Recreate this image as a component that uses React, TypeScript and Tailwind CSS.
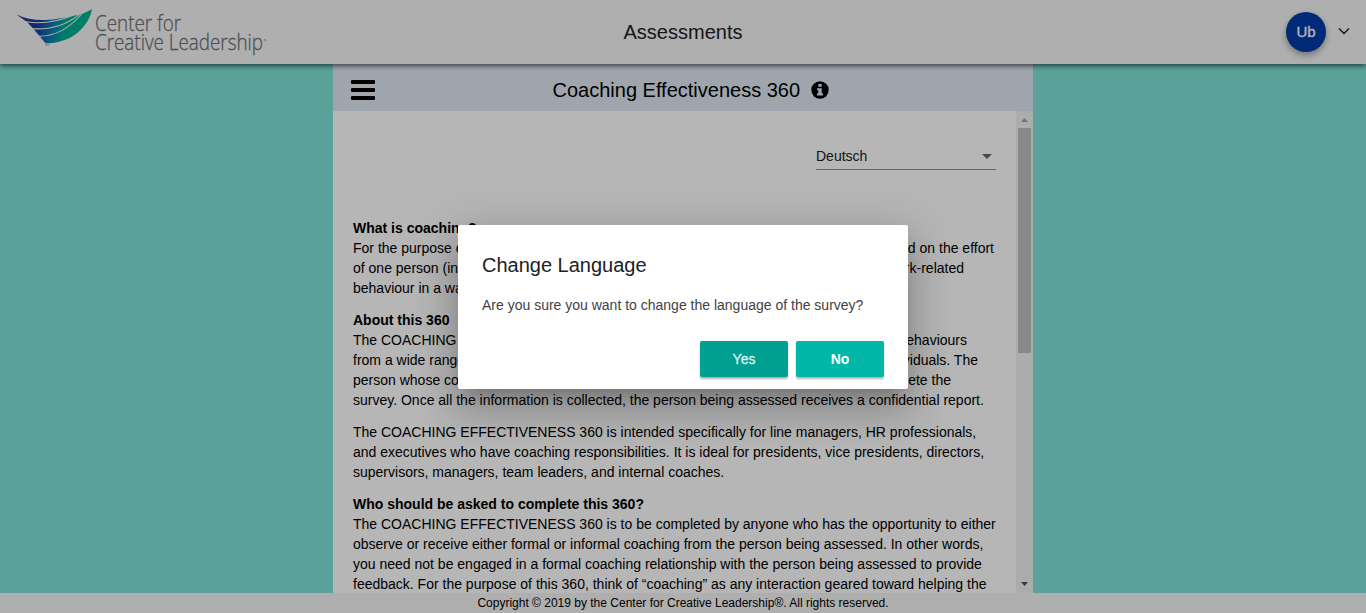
import React from "react";

type Line = string | { start: string; end: string; width: string };

function Logo() {
  return (
    <svg className="block h-16 w-[280px]" viewBox="0 0 280 64">
      <defs>
        <linearGradient id="wing" gradientUnits="userSpaceOnUse" x1="20" y1="10" x2="86" y2="22">
          <stop offset="0" stopColor="#3a2b92" />
          <stop offset="0.3" stopColor="#173c9a" />
          <stop offset="0.52" stopColor="#0f7fae" />
          <stop offset="0.7" stopColor="#00ab98" />
          <stop offset="1" stopColor="#00b28c" />
        </linearGradient>
      </defs>
      <path
        d="M16.500 14.500C25 18.500 35 20.500 46 20C55 19.500 63 18 72 16C81 14.500 87 12.500 92 9C91 17 85 27 76 34C68 40 56 43.500 45.500 43.300L39.500 36L33.500 29L27 22Z"
        fill="url(#wing)"
      />
      <path
        d="M26 21.800C44 24.500 58 21.500 72.500 15.500M32 28.700C48 29.800 66 25.500 80 13.800M38.500 36.200C54 36.500 69 29 82.500 13"
        fill="none"
        stroke="#f5f5f5"
        strokeWidth="1.050"
      />
      <g fill="#6c7276" stroke="#6c7276" strokeWidth="0.300" fontFamily="'Open Sans', 'Noto Sans', sans-serif" fontWeight="300">
        <text x="95" y="30.600" fontSize="21.500" textLength="86" lengthAdjust="spacingAndGlyphs">Center for</text>
        <text x="95" y="50" fontSize="21.500" textLength="168" lengthAdjust="spacingAndGlyphs">Creative Leadership</text>
      </g>
      <circle cx="264.800" cy="40.200" r="0.800" fill="none" stroke="#777c80" strokeWidth="0.500" />
      <path d="M45.500 44.600h3M46.500 44.600v1.400M48.500 46v-1.400" fill="none" stroke="#777c80" strokeWidth="0.500" />
    </svg>
  );
}

function InfoIcon() {
  return (
    <svg className="ml-[11px] size-[18px]" viewBox="0 0 18 18">
      <circle cx="9" cy="9" r="8.700" fill="#000" />
      <path d="M7.300 3h3.400v2.700H7.300zM6 7.200h4.700v5.100H12v2.100H6v-2.100h1.300v-3H6z" fill="#dfe8f3" />
    </svg>
  );
}

function Section({ title, lines }: { title?: string; lines: Line[] }) {
  return (
    <section className="mb-3 whitespace-nowrap">
      {title && <h2 className="font-bold">{title}</h2>}
      {lines.map((line) =>
        typeof line === "string" ? (
          <p key={line}>{line}</p>
        ) : (
          <p key={line.start} className={`flex justify-between ${line.width}`}>
            <span>{line.start}</span>
            <span>{line.end}</span>
          </p>
        ),
      )}
    </section>
  );
}

export default function App() {
  return (
    <div className="relative flex h-[613px] w-[1366px] flex-col overflow-hidden bg-[#80e3da] font-['Liberation_Sans',Arial,sans-serif] text-sm leading-5 text-black">
      <header className="relative z-10 grid h-16 shrink-0 grid-cols-3 items-center bg-[#f5f5f5] shadow-[0_2px_5px_rgba(0,0,0,0.6)]">
        <Logo />
        <h1 className="text-center text-[20px] text-[#212121]">Assessments</h1>
        <div className="flex items-center justify-end pr-4">
          <div className="flex size-10 items-center justify-center rounded-full bg-[#003ca9] text-[15px] text-white shadow-[0_3px_6px_rgba(0,0,0,0.35)]">
            <span className="[-webkit-text-stroke:0.3px_white]">Ub</span>
          </div>
          <svg className="mb-[3px] ml-3 h-3 w-3" viewBox="0 0 12 12">
            <path d="M1 3.500L6 8.500L11 3.500" fill="none" stroke="#222" strokeWidth="1.500" />
          </svg>
        </div>
      </header>

      <main className="mx-auto flex min-h-0 w-[700px] flex-1 flex-col bg-white">
        <div className="flex h-[47px] shrink-0 items-center bg-[#dfe8f3] pl-[18px]">
          <button className="mt-1 flex w-6 flex-col gap-1" aria-label="Menu">
            <span className="h-1 rounded-[1px] bg-black" />
            <span className="h-1 rounded-[1px] bg-black" />
            <span className="h-1 rounded-[1px] bg-black" />
          </button>
          <div className="mt-1 ml-[177.500px] flex items-center whitespace-nowrap">
            <span className="text-[20px]">Coaching Effectiveness 360</span>
            <InfoIcon />
          </div>
        </div>
        <div className="flex min-h-0 flex-1">
          <div className="w-[683px] overflow-hidden px-5">
            <div className="mt-[34px] ml-auto flex h-[25px] w-[180px] items-start justify-between border-b border-[#949494] text-[#212121]">
              <span className="mt-px">Deutsch</span>
              <svg className="mt-[9px] mr-1 h-[5px] w-2.5" viewBox="0 0 10 5">
                <path d="M0 0h10L5 5z" fill="#666" />
              </svg>
            </div>
            <div className="mt-12">
              <Section
                title="What is coaching?"
                lines={[
                  { start: "For the purpose of this survey, coaching", end: "is a relationship focused on the effort", width: "w-[641px]" },
                  { start: "of one person (internal coach) to help", end: "another improve work-related", width: "w-[611px]" },
                  "behaviour in a way that benefits them.",
                ]}
              />
              <Section
                title="About this 360"
                lines={[
                  { start: "The COACHING EFFECTIVENESS 360", end: "collects coaching behaviours", width: "w-[614px]" },
                  { start: "from a wide range of people, providing", end: "a view shared by individuals. The", width: "w-[625px]" },
                  { start: "person whose coaching is assessed", end: "and the raters complete the", width: "w-[598px]" },
                  "survey. Once all the information is collected, the person being assessed receives a confidential report.",
                ]}
              />
              <Section
                lines={[
                  "The COACHING EFFECTIVENESS 360 is intended specifically for line managers, HR professionals,",
                  "and executives who have coaching responsibilities. It is ideal for presidents, vice presidents, directors,",
                  "supervisors, managers, team leaders, and internal coaches.",
                ]}
              />
              <Section
                title="Who should be asked to complete this 360?"
                lines={[
                  "The COACHING EFFECTIVENESS 360 is to be completed by anyone who has the opportunity to either",
                  "observe or receive either formal or informal coaching from the person being assessed. In other words,",
                  "you need not be engaged in a formal coaching relationship with the person being assessed to provide",
                  "feedback. For the purpose of this 360, think of “coaching” as any interaction geared toward helping the",
                ]}
              />
            </div>
          </div>
          <div className="flex w-[17px] flex-col items-center bg-[#f1f1f1]">
            <svg className="h-[17px] w-[17px] shrink-0" viewBox="0 0 17 17">
              <path d="M5 11h7L8.500 7z" fill="#a3a3a3" />
            </svg>
            <div className="h-[225px] w-[13px] bg-[#c1c1c1]" />
            <svg className="mt-auto h-[17px] w-[17px] shrink-0" viewBox="0 0 17 17">
              <path d="M5 6h7L8.500 10z" fill="#505050" />
            </svg>
          </div>
        </div>
      </main>

      <footer className="h-5 shrink-0 bg-[#f5f5f5] text-center text-xs leading-5">
        Copyright © 2019 by the Center for Creative Leadership®. All rights reserved.
      </footer>

      <div className="absolute inset-0 z-20 flex items-center justify-center bg-black/[.288]">
        <div
          role="dialog"
          className="h-[164px] w-[450px] rounded-[2px] bg-white px-6 pt-6 whitespace-nowrap text-[#212121] shadow-[0_11px_15px_-7px_rgba(0,0,0,0.2),0_24px_38px_3px_rgba(0,0,0,0.14),0_9px_46px_8px_rgba(0,0,0,0.12)]"
        >
          <h2 className="text-[20px] leading-8">Change Language</h2>
          <p className="mt-3.5 text-[#424242]">Are you sure you want to change the language of the survey?</p>
          <div className="mt-[26px] flex justify-end gap-2 leading-9">
            <button className="h-9 w-[88px] rounded-[2px] bg-[#00a091] text-[#d9f1ee] shadow-[0_2px_2px_rgba(0,0,0,0.3)] [-webkit-text-stroke:0.3px_#d9f1ee]">
              Yes
            </button>
            <button className="h-9 w-[88px] rounded-[2px] bg-[#00b7a8] font-bold text-white shadow-[0_2px_2px_rgba(0,0,0,0.3)]">
              No
            </button>
          </div>
        </div>
      </div>
    </div>
  );
}
